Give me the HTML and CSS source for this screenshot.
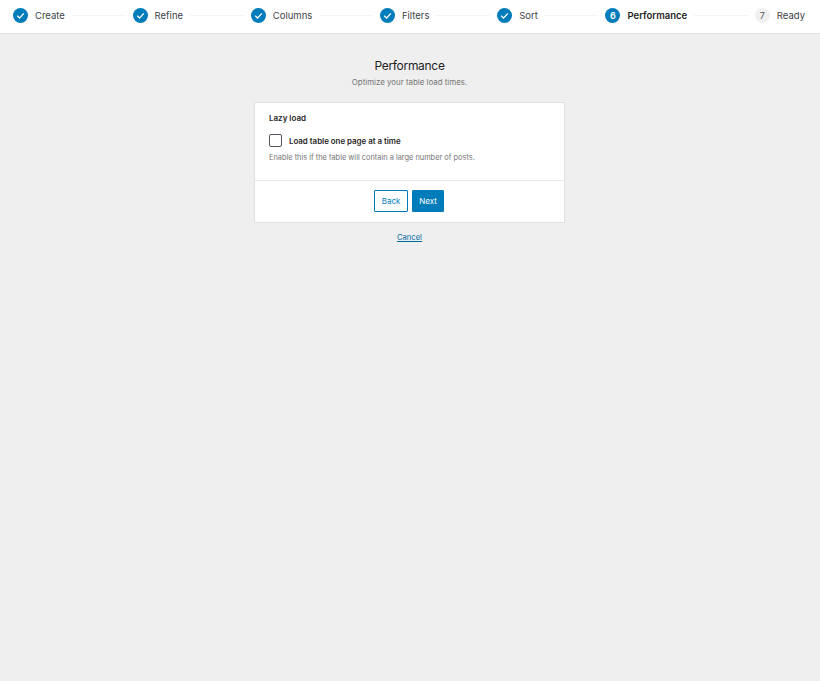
FILE: index.html
```html
<!DOCTYPE html>
<html lang="en">
  <head>
    <meta charset="UTF-8" />
    <title>Performance</title>
    <link rel="stylesheet" href="styles.css">
  </head>
  <body>
    <div class="steps">
      <div class="step">
        <span class="step-icon">
          <svg viewBox="0 0 16 16"><path d="M4.5 8.3l2.5 2.4 4.6-5"/></svg>
        </span>
        <span class="step-label">Create</span>
      </div>
      <div class="step-line"></div>
      <div class="step">
        <span class="step-icon">
          <svg viewBox="0 0 16 16"><path d="M4.5 8.3l2.5 2.4 4.6-5"/></svg>
        </span>
        <span class="step-label">Refine</span>
      </div>
      <div class="step-line"></div>
      <div class="step">
        <span class="step-icon">
          <svg viewBox="0 0 16 16"><path d="M4.5 8.3l2.5 2.4 4.6-5"/></svg>
        </span>
        <span class="step-label">Columns</span>
      </div>
      <div class="step-line"></div>
      <div class="step">
        <span class="step-icon">
          <svg viewBox="0 0 16 16"><path d="M4.5 8.3l2.5 2.4 4.6-5"/></svg>
        </span>
        <span class="step-label">Filters</span>
      </div>
      <div class="step-line"></div>
      <div class="step">
        <span class="step-icon">
          <svg viewBox="0 0 16 16"><path d="M4.5 8.3l2.5 2.4 4.6-5"/></svg>
        </span>
        <span class="step-label">Sort</span>
      </div>
      <div class="step-line"></div>
      <div class="step active">
        <span class="step-icon">6</span>
        <span class="step-label">Performance</span>
      </div>
      <div class="step-line"></div>
      <div class="step todo">
        <span class="step-icon">7</span>
        <span class="step-label">Ready</span>
      </div>
    </div>

    <div class="wizard">
      <h1>Performance</h1>
      <p class="intro">Optimize your table load times.</p>

      <div class="card">
        <div class="card-body">
          <h2>Lazy load</h2>
          <label class="check">
            <span class="check-box"></span>
            <span>Load table one page at a time</span>
          </label>
          <p class="help">Enable this if the table will contain a large number of posts.</p>
        </div>
        <div class="card-footer">
          <button class="btn btn-back">Back</button>
          <button class="btn btn-next">Next</button>
        </div>
      </div>

      <a class="cancel" href="#">Cancel</a>
    </div>
  </body>
</html>
```

FILE: styles.css
```css
* {
  margin: 0;
  padding: 0;
  box-sizing: border-box;
}

body {
  font-family: Inter, "Liberation Sans", sans-serif;
  background: #efefef;
  color: #1e1e1e;
  min-height: 100vh;
}

.steps {
  display: flex;
  align-items: center;
  height: 34px;
  padding: 0 15px 3px 13px;
  background: #fff;
  border-bottom: 1px solid #e4e4e4;
}

.step {
  display: flex;
  align-items: center;
  gap: 7px;
  font-size: 9.5px;
  color: #3c434a;
}

.step-icon {
  display: flex;
  align-items: center;
  justify-content: center;
  width: 15px;
  height: 15px;
  border-radius: 50%;
  background: #007cba;
  color: #fff;
  font-size: 9px;
  font-weight: 600;
}

.step-icon svg {
  width: 15px;
  height: 15px;
  fill: none;
  stroke: #fff;
  stroke-width: 1.3;
}

.step-line {
  flex: 1;
  height: 1px;
  margin: 0 7px;
  background: #f4f4f4;
}

.step.active {
  font-weight: 600;
  color: #1e1e1e;
}

.step.todo .step-icon {
  background: #f0f0f0;
  color: #50575e;
  font-weight: 400;
}

.wizard {
  display: flex;
  flex-direction: column;
  align-items: center;
  padding: 24px 1px 0 0;
}

.wizard h1 {
  font-size: 12px;
  font-weight: 400;
  line-height: 16px;
  letter-spacing: -0.3px;
}

.intro {
  margin-top: 2px;
  font-size: 7.9px;
  line-height: 12px;
  color: #757575;
}

.card {
  width: 311px;
  margin-top: 14px;
  background: #fff;
  border: 1px solid #e0e0e0;
  border-radius: 1px;
}

.card-body {
  padding: 9px 14px 16px;
}

.card-body h2 {
  font-size: 8px;
  font-weight: 600;
  line-height: 12px;
}

.check {
  display: flex;
  align-items: center;
  gap: 7px;
  margin-top: 10px;
  font-size: 7.9px;
  font-weight: 600;
}

.check-box {
  width: 13px;
  height: 13px;
  background: #fff;
  border: 1px solid #50575e;
  border-radius: 2px;
}

.help {
  margin-top: 5px;
  font-size: 7.4px;
  line-height: 12px;
  color: #757575;
}

.card-footer {
  display: flex;
  justify-content: center;
  gap: 4px;
  padding: 9px 1px 10px 0;
  border-top: 1px solid #e8e8e8;
}

.btn {
  height: 22px;
  font-family: inherit;
  font-size: 8px;
  border-radius: 1px;
  border: 1px solid #007cba;
}

.btn-back {
  width: 34px;
  background: #fff;
  color: #007cba;
}

.btn-next {
  width: 32px;
  background: #007cba;
  color: #fff;
}

.cancel {
  margin-top: 9px;
  font-size: 7.6px;
  line-height: 12px;
  color: #006ba1;
}
```
